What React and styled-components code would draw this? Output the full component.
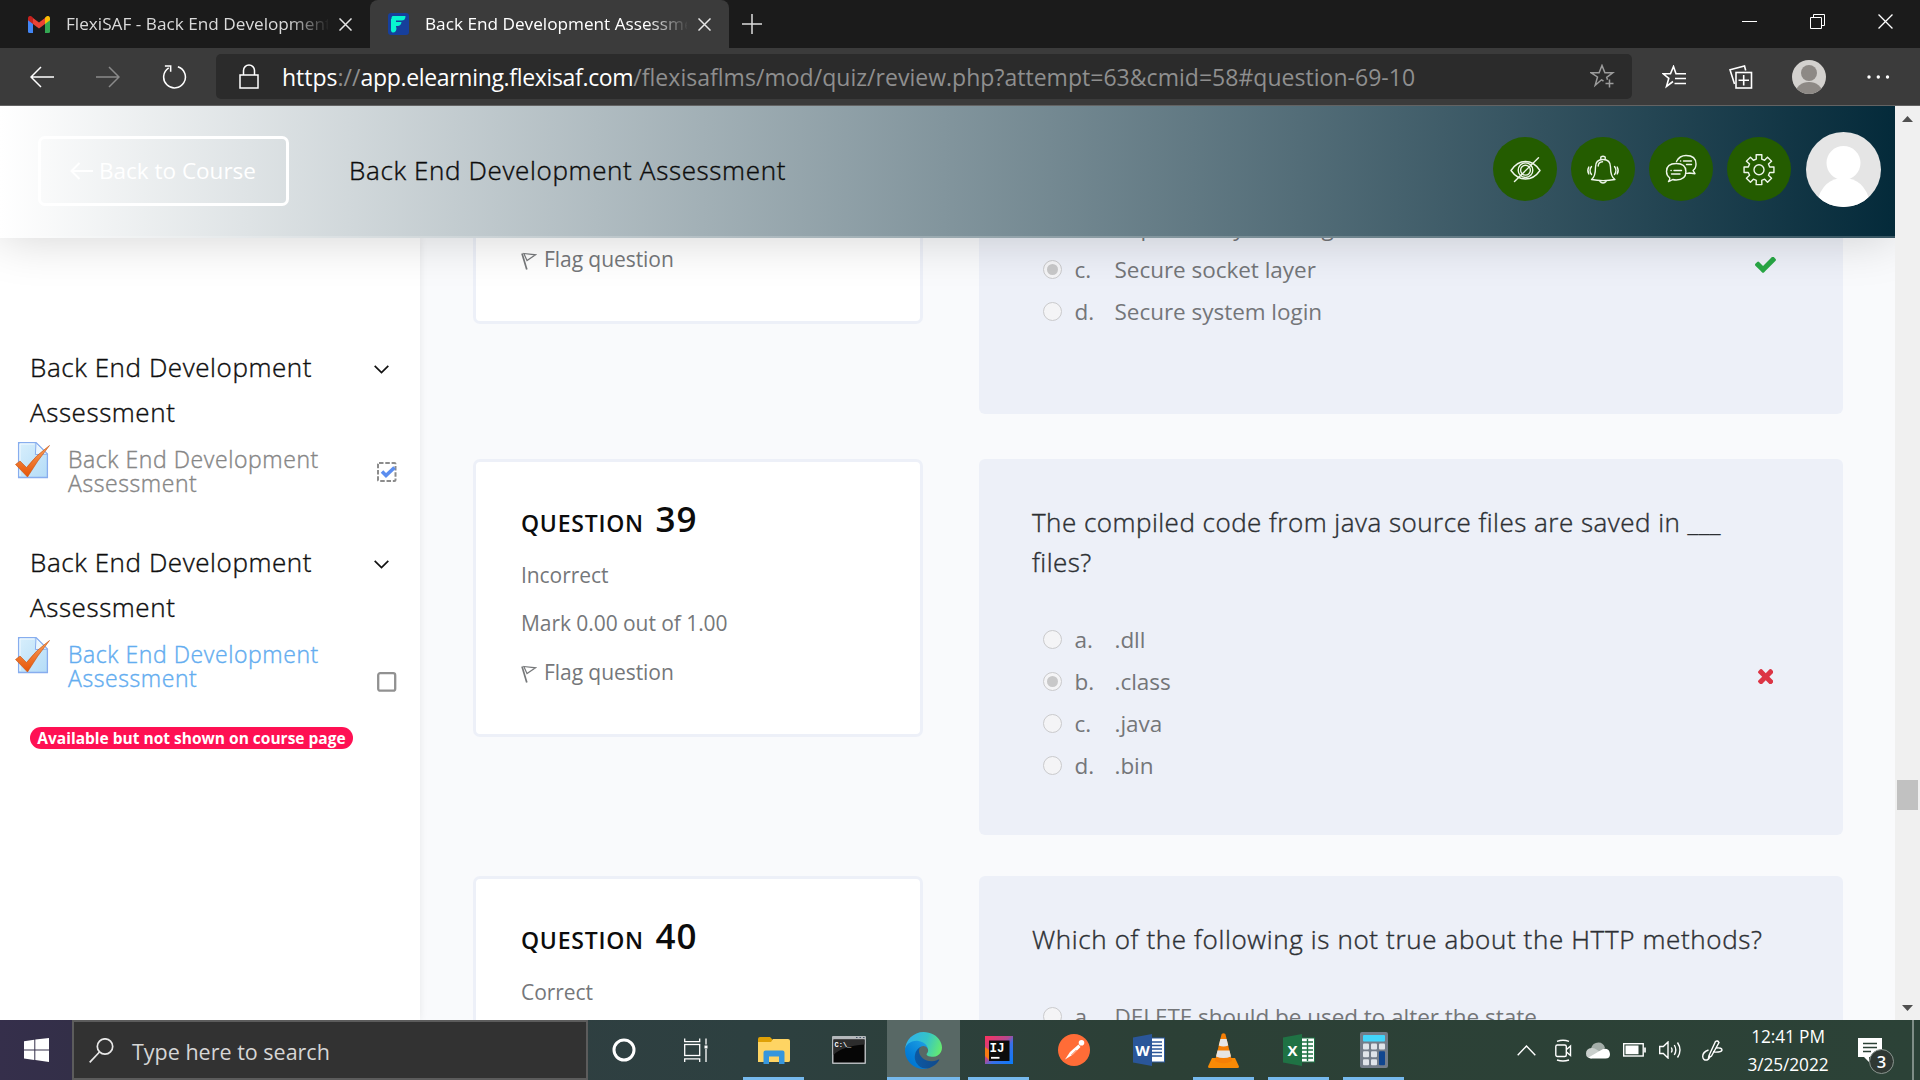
import React from "react";
import styled, { createGlobalStyle, css } from "styled-components";

const SANS = `"Open Sans", "Noto Sans", sans-serif`;

const GlobalStyle = createGlobalStyle`
  *, *::before, *::after { box-sizing: border-box; }
  body { margin: 0; background: #fff; font-family: ${SANS}; overflow: hidden; }
  svg { display: block; flex: none; }
`;

/* Light text with a hair of extra stroke, between the 300 and 400 weights. */
const softLight = css`
  font-weight: 300;
  -webkit-text-stroke: 0.4px currentColor;
`;

const Screen = styled.div`
  width: 1920px;
  height: 1080px;
  display: flex;
  flex-direction: column;
  overflow: hidden;
`;

/* ---------- Browser chrome ---------- */

const TabStrip = styled.div`
  height: 48px;
  flex: none;
  display: flex;
  background: #1b1b1b;
`;

const Tab = styled.div`
  width: ${(p) => (p.$active ? 359 : 370)}px;
  height: 48px;
  display: flex;
  align-items: center;
  padding-left: ${(p) => (p.$active ? 18 : 28)}px;
  border-radius: 8px 8px 0 0;
  background: ${(p) => (p.$active ? "#3b3b3b" : "transparent")};
`;

const TabTitle = styled.div`
  width: 262px;
  margin-left: 16px;
  overflow: hidden;
  white-space: nowrap;
  font-size: 17.2px;
  line-height: 48px;
  color: ${(p) => (p.$active ? "#fff" : "#dadada")};
  mask-image: linear-gradient(90deg, #000 222px, transparent 264px);
`;

const TabClose = styled.div`
  margin-left: 11px;
`;

const NewTab = styled.div`
  display: flex;
  align-items: center;
  padding-left: 13px;
`;

const WindowControls = styled.div`
  margin-left: auto;
  display: flex;
  align-items: center;
  gap: 53px;
  padding-right: 27px;
  padding-bottom: 6px;
`;

const Toolbar = styled.div`
  height: 58px;
  flex: none;
  display: flex;
  align-items: center;
  background: #3b3b3b;
  border-bottom: 1px solid #636363;
`;

const NavButtons = styled.div`
  width: 216px;
  display: flex;
  align-items: center;
  gap: 42px;
  padding-left: 30px;
`;

const AddressBar = styled.div`
  width: 1416px;
  height: 45px;
  display: flex;
  align-items: center;
  padding: 0 17px 0 23px;
  border-radius: 5px;
  background: #2b2b2b;
`;

const Url = styled.div`
  flex: 1;
  margin-left: 23px;
  padding-top: 2px;
  font-size: 23px;
  letter-spacing: 0.03px;
  line-height: 43px;
  white-space: nowrap;
  color: #8f8f8f;
`;

const UrlStrong = styled.span`
  color: #fff;
  letter-spacing: ${(p) => (p.$tight ? "-0.33px" : "0")};
`;

const ToolbarActions = styled.div`
  flex: 1;
  display: flex;
  align-items: center;
  padding-left: 30px;
`;

const Action = styled.div`
  margin-right: ${(p) => p.$after}px;
`;

/* ---------- Page ---------- */

const Viewport = styled.div`
  height: 914px;
  flex: none;
  display: flex;
`;

const Page = styled.div`
  width: 1895px;
  display: flex;
  flex-direction: column;
  overflow: hidden;
  background: #f9fafc;
`;

const Header = styled.header`
  position: relative;
  z-index: 2;
  height: 132px;
  flex: none;
  display: flex;
  align-items: center;
  padding: 0 14px 2px 38px;
  background: linear-gradient(90deg, #fff, #042a3a);
  border-bottom: 2px solid rgba(255, 255, 255, 0.2);
  background-origin: border-box;
  box-shadow: 0 0 50px rgba(0, 0, 0, 0.18);
`;

const BackButton = styled.button`
  width: 251px;
  height: 70px;
  display: flex;
  align-items: center;
  justify-content: center;
  gap: 6px;
  margin: 2px 0 0;
  padding: 0 1px 0 0;
  border: 3px solid #fff;
  border-radius: 7px;
  background: transparent;
  color: #fff;
  font: 400 22.5px/30px ${SANS};
`;

const HeaderTitle = styled.h1`
  margin: 0 auto 0 60px;
  font-size: 26px;
  ${softLight}
  letter-spacing: 0.65px;
  line-height: 36px;
  color: #0c0c0c;
`;

const HeaderTools = styled.div`
  display: flex;
  align-items: center;
  gap: 14px;
  margin-bottom: 2px;
`;

const RoundButton = styled.div`
  width: 64px;
  height: 64px;
  display: flex;
  border-radius: 50%;
  background: #245c00;
`;

const Avatar = styled.div`
  width: 75px;
  height: 75px;
  margin-left: 1px;
  border-radius: 50%;
  overflow: hidden;
`;

const Body = styled.div`
  height: 782px;
  display: flex;
  overflow: hidden;
`;

/* ---------- Sidebar ---------- */

const Sidebar = styled.aside`
  width: 420px;
  flex: none;
  padding-top: 107px;
  background: #fff;
  box-shadow: 0 0 8px rgba(0, 0, 0, 0.08);
`;

const Section = styled.section`
  height: 195px;
`;

const SectionHead = styled.div`
  height: 90px;
  display: flex;
  justify-content: space-between;
  padding: 0 31px 0 30px;
`;

const SectionTitle = styled.h2`
  width: 300px;
  margin: 0;
  font-size: 26px;
  ${softLight}
  letter-spacing: 0.58px;
  line-height: 45px;
  color: #0e0e0e;
`;

const ChevronBox = styled.div`
  padding-top: 20px;
`;

const Activity = styled.div`
  display: flex;
  align-items: flex-start;
  padding: 7px 23px 0 14px;
`;

const ActivityLink = styled.a`
  width: 270px;
  margin: 5px 0 0 18px;
  font-size: 23px;
  ${softLight}
  letter-spacing: 0.58px;
  line-height: 24.3px;
  color: ${(p) => (p.$current ? "#63adf0" : "#868686")};
`;

const CompletionBox = styled.div`
  margin: ${(p) => (p.$lower ? 35 : 20)}px 0 0 auto;
`;

const Notice = styled.div`
  width: 323px;
  height: 22px;
  margin: -8px 0 0 30px;
  border-radius: 11px;
  background: #ff1053;
  color: #fff;
  font-size: 15.5px;
  font-weight: 700;
  line-height: 22px;
  text-align: center;
  white-space: nowrap;
`;

/* ---------- Quiz ---------- */

const Quiz = styled.main`
  flex: 1;
  display: flex;
  flex-direction: column;
  padding: 0 52px 0 53px;
`;

const QuestionRow = styled.div`
  flex: none;
  display: flex;
  align-items: flex-start;
  gap: 56px;
  margin-bottom: ${(p) => p.$after || 0}px;
`;

const cut = css`
  border-top: 0;
  border-top-left-radius: 0;
  border-top-right-radius: 0;
`;

const InfoCard = styled.div`
  width: 450px;
  height: ${(p) => p.$height}px;
  padding: ${(p) => (p.$cut ? 0 : 37)}px 0 0 45px;
  border: 3px solid #edf0f8;
  border-radius: 7px;
  background: #fff;
  ${(p) => p.$cut && cut}
`;

const InfoHeading = styled.h3`
  height: 51.5px;
  margin: 0;
  display: flex;
  align-items: baseline;
  font-weight: 600;
  line-height: 40px;
  color: #0c0c0c;
`;

const InfoLabel = styled.span`
  width: 134.5px;
  font-size: 23px;
  letter-spacing: 0.75px;
`;

const InfoNumber = styled.span`
  font-size: 35px;
  letter-spacing: 0.9px;
`;

const InfoLine = styled.div`
  height: 48.5px;
  display: flex;
  align-items: center;
  gap: 7px;
  font-size: 21px;
  letter-spacing: -0.06px;
  line-height: 48px;
  color: #75777a;
  margin-top: ${(p) => p.$shift || 0}px;
`;

const QuestionCard = styled.div`
  width: 864px;
  height: ${(p) => p.$height}px;
  padding: ${(p) => (p.$cut ? 0 : 43)}px 49px 0 53px;
  border-radius: 6px;
  background: #edf0f8;
  overflow: hidden;
  ${(p) => p.$cut && cut}
`;

const QuestionText = styled.p`
  width: 740px;
  margin: 0 0 36.5px;
  font-size: 26px;
  ${softLight}
  letter-spacing: ${(p) => p.$tracking}px;
  line-height: 40px;
  color: #2c2f33;
`;

const Options = styled.div`
  margin-top: ${(p) => p.$shift || 0}px;
`;

const Option = styled.div`
  height: 42px;
  display: flex;
  align-items: center;
  padding: 0 18px 0 11px;
  font-size: 22.5px;
  letter-spacing: -0.03px;
  line-height: 42px;
  white-space: nowrap;
  color: #747679;
`;

const Radio = styled.span`
  width: 19px;
  height: 19px;
  display: flex;
  align-items: center;
  justify-content: center;
  border: 1px solid #cacacc;
  border-radius: 50%;
  background: #f4f4f6;
  &::after {
    content: "";
    width: 11px;
    height: 11px;
    border-radius: 50%;
    background: ${(p) => (p.$checked ? "#c8c8c9" : "transparent")};
  }
`;

const Letter = styled.span`
  width: 40px;
  margin-left: 12.5px;
`;

const Grade = styled.span`
  margin: 0 0 10px auto;
  width: 21px;
  display: flex;
  justify-content: center;
`;

const ScrollTrack = styled.div`
  width: 25px;
  display: flex;
  flex-direction: column;
  align-items: center;
  padding: 10px 0 9px;
  background: #f0f0f0;
`;

const ScrollThumb = styled.div`
  width: 21px;
  height: 30px;
  margin: 658px 0 auto;
  background: #c1c1c1;
`;

/* ---------- Taskbar ---------- */

const Taskbar = styled.div`
  height: 60px;
  flex: none;
  display: flex;
  background: linear-gradient(90deg, #352f4b 0, #332f48 72px, #2f3f41 560px, #2d4040 750px, #2c4036 1150px, #2c4237 1920px);
`;

const Start = styled.div`
  width: 72px;
  padding: 18px 0 0 24px;
`;

const SearchBox = styled.div`
  width: 516px;
  display: flex;
  align-items: center;
  gap: 18px;
  padding-left: 15px;
  border: 2px solid #5c5c5c;
  background: #323232;
  color: #d6d6d6;
  font-size: 21.5px;
  line-height: 54px;
`;

const SearchHint = styled.span`
  padding-top: 3px;
`;

const SystemButtons = styled.div`
  width: 148px;
  display: flex;
  align-items: center;
  padding-left: 24px;
  gap: 48px;
`;

const AppButton = styled.div`
  width: 75px;
  display: flex;
  justify-content: center;
`;

const AppTile = styled.div`
  width: ${(p) => (p.$focused ? 73 : 61)}px;
  height: 60px;
  display: flex;
  align-items: center;
  justify-content: center;
  background: ${(p) => (p.$focused ? "#586865" : "transparent")};
  border-bottom: 3px solid ${(p) => (p.$running ? "#76b9ed" : "transparent")};
  padding-top: 3px;
`;

const Tray = styled.div`
  margin-left: auto;
  display: flex;
  align-items: center;
`;

const TrayItem = styled.div`
  margin-right: ${(p) => p.$after}px;
  padding-top: ${(p) => p.$drop || 0}px;
`;

const Clock = styled.div`
  width: 88px;
  margin-right: 26px;
  padding-top: 2px;
  color: #fff;
  font-size: 17.3px;
  letter-spacing: -0.1px;
  line-height: 28px;
  text-align: center;
  white-space: nowrap;
`;

const ShowDesktop = styled.div`
  width: 8px;
  height: 60px;
  border-left: 2px solid #7f8d86;
`;

/* ---------- Drawings ---------- */

const Cross = ({ size = 13, color = "#e6e6e6", w = 1.6 }) => (
  <svg width={size} height={size} viewBox="0 0 14 14" stroke={color} strokeWidth={w} fill="none">
    <path d="M.5.5l13 13M13.5.5l-13 13" />
  </svg>
);

const GmailLogo = () => (
  <svg width="22" height="17" viewBox="0 0 22 17">
    <path d="M0 3v12.500Q0 17 1.500 17H5V7z" fill="#4285f4" />
    <path d="M22 3v12.500Q22 17 20.500 17H17V7z" fill="#34a853" />
    <path d="M5 8V2l6 4.600L17 2v6l-6 4.600z" fill="#ea4335" />
    <path d="M0 2.400C0 0 2.400-.8 4 .8L5 1.700V8L0 4.300z" fill="#c5221f" />
    <path d="M22 2.400C22 0 19.600-.8 18 .8l-1 .9V8l5-3.700z" fill="#fbbc04" />
  </svg>
);

const FlexiLogo = () => (
  <svg width="21" height="22" viewBox="0 0 21 22">
    <rect width="21" height="22" rx="3" fill="#163f9c" />
    <path d="M5 3h12.500q0 4.500-4 4.500H3.500Q3 3 5 3zM3 9h10.500q-.5 4-4 4H3zM3 14.500h5.500q0 5-3.500 5-2.500 0-2-5z" fill="#08f5d0" />
    <path d="M3 6h5v9H3z" fill="#08f5d0" />
  </svg>
);

const Arrow = ({ color, flip }) => (
  <svg width="24" height="22" viewBox="0 0 24 22" fill="none" stroke={color} strokeWidth="1.500">
    <path d={flip ? "M0 11h23M13 1l10 10-10 10" : "M24 11H1M11 1L1 11l10 10"} />
  </svg>
);

const Refresh = () => (
  <svg width="25" height="25" viewBox="0 0 26 25" fill="none" stroke="#fff" strokeWidth="1.600">
    <path d="M16.500 2.300A11.300 11.300 0 1 1 7 3.500M3 1.500h6v6" />
  </svg>
);

const Lock = () => (
  <svg width="20" height="25" viewBox="0 0 20 25" fill="none" stroke="#fff" strokeWidth="1.500">
    <rect x="1" y="11" width="18" height="13" />
    <path d="M4.500 11V6.500a5.500 5.500 0 0 1 11 0V11" />
  </svg>
);

const StarPlus = () => (
  <svg width="25" height="25" viewBox="0 0 25 25" fill="none" stroke="#9b9b9b" strokeWidth="1.500">
    <path d="M13.500 17l-2-1.200-6.300 5.400 2.300-8.200L1.200 8.800h7.900L12 1.500l2.900 7.300h7.900l-6.100 4.500.8 2.500M19.500 15.500v8M15.500 19.500h8" />
  </svg>
);

const StarList = () => (
  <svg width="25" height="24" viewBox="0 0 25 24" fill="none" stroke="#fff" strokeWidth="1.600">
    <path d="M11 16.500l-6.500 5 2.300-8.200L1.200 8.800h7.300L11.500 1.500l2.500 7.300h10M13 13.500h11M12.500 18.500H24" />
  </svg>
);

const Collections = () => (
  <svg width="24" height="24" viewBox="0 0 24 24" fill="none" stroke="#fff" strokeWidth="1.600">
    <path d="M5.500 19L1 4.700 15.500 1l1.200 4.500" />
    <rect x="7" y="7.500" width="15.500" height="15.500" />
    <path d="M14.700 10v10.500M9.500 15.200H20" />
  </svg>
);

const ProfilePicture = () => (
  <svg width="34" height="34" viewBox="0 0 34 34">
    <defs>
      <clipPath id="profile"><circle cx="17" cy="17" r="17" /></clipPath>
    </defs>
    <g clipPath="url(#profile)">
      <rect width="34" height="34" fill="#d3d1ce" />
      <circle cx="17" cy="13" r="8" fill="#8d8985" />
      <ellipse cx="17" cy="33" rx="13.500" ry="11" fill="#8d8985" />
    </g>
  </svg>
);

const UserPicture = () => (
  <svg width="75" height="75" viewBox="0 0 75 75">
    <rect width="75" height="75" fill="#e5e5e5" />
    <circle cx="37.500" cy="31" r="17" fill="#fff" />
    <path d="M11 70Q17 46 37.500 46T64 70v5H11z" fill="#fff" />
  </svg>
);

const line = { width: 64, height: 64, viewBox: "0 0 64 64", fill: "none", stroke: "#eef6ea", strokeWidth: 1.4, strokeLinejoin: "round", strokeLinecap: "round" };

const EyeOff = () => (
  <svg {...line}>
    <path d="M18 33.500Q24 24.500 32.500 24.500T47 33.500Q41 42 32.500 42T18 33.500z" />
    <circle cx="32.500" cy="33.200" r="7.300" />
    <circle cx="32.500" cy="33.200" r="4.900" />
    <path d="M21.500 44.500L45.500 20.800" />
  </svg>
);

const Bell = () => (
  <svg {...line}>
    <path d="M20.500 42.500q4-2.500 4-12.500 0-7.500 7.500-7.500T39.500 30q0 10 4.500 12.500-12 2.200-23.500 0zM28.500 44q3.500 4 7 0M29.800 22v-2q2.200-1.500 4.400 0v2M27.200 29q.3-4 4.300-4.200" />
    <path d="M20.500 29.500q-3 4 0 8M17.800 30q-2 3.500 0 7M43.500 29.500q3 4 0 8M46.200 30q2 3.500 0 7" />
  </svg>
);

const Chats = () => (
  <svg {...line}>
    <path d="M27.500 24.500q3-6 9.500-6 10 0 10 8.500 0 4.500-3 6.500l2 3.200-5.500-.7q-2 .5-3.700.3" />
    <path d="M19.500 44.500q1.500-1.500 1.300-3.500-3.300-2.500-3.300-6.500 0-8 9.700-8t9.700 8q0 8.500-9.700 8.500-2 0-3.500-.5-2 1.300-4.200 2z" />
    <path d="M31.500 24h.2M34.500 24h8M37.500 27.500h5M22 33.500h.2M25 33.500h7.500M22.500 37h8.500" />
  </svg>
);

const gearPath = (() => {
  const pts = [];
  for (let i = 0; i < 8; i += 1) {
    const a = (i * Math.PI) / 4;
    [[-0.25, 11], [-0.19, 15.2], [0.19, 15.2], [0.25, 11]].forEach(([d, r]) => {
      pts.push(`${(32 + r * Math.sin(a + d)).toFixed(2)} ${(32.7 - r * Math.cos(a + d)).toFixed(2)}`);
    });
  }
  return `M${pts.join("L")}z`;
})();

const Gear = () => (
  <svg {...line}>
    <path d={gearPath} />
    <circle cx="32" cy="32.700" r="5" />
  </svg>
);

const BackArrow = () => (
  <svg width="23" height="18" viewBox="0 0 23 18" fill="none" stroke="#fff" strokeWidth="2">
    <path d="M23 9H1.500M9.500 1l-8 8 8 8" />
  </svg>
);

const Chevron = () => (
  <svg width="15" height="9" viewBox="0 0 15 9" fill="none" stroke="#111" strokeWidth="1.700">
    <path d="M.7.8l6.800 6.700L14.300.8" />
  </svg>
);

const QuizIcon = () => (
  <svg width="36" height="37" viewBox="0 0 36 37">
    <defs>
      <linearGradient id="paper" x1="0" y1="0" x2="1" y2="1">
        <stop offset="0" stopColor="#d8effc" />
        <stop offset="1" stopColor="#b4dcf7" />
      </linearGradient>
      <linearGradient id="tick" x1="0" y1="0" x2="0" y2="1">
        <stop offset="0" stopColor="#f9a05c" />
        <stop offset="1" stopColor="#e65305" />
      </linearGradient>
    </defs>
    <path d="M4.600.7h17.500L33.400 12v23.500H4.600z" fill="url(#paper)" stroke="#87adee" strokeWidth="1.300" />
    <path d="M6 34V2h14.500" fill="none" stroke="#f2faff" />
    <path d="M22 .8l-.6 11.700 12-.3z" fill="#eaf6fe" stroke="#87adee" />
    <path d="M1.500 22.500l4.500-3.500 6.500 6.500Q22 13 35.500 3.500 23 19 13.500 35z" fill="url(#tick)" stroke="#c4500f" strokeWidth=".6" />
  </svg>
);

const BoxChecked = () => (
  <svg width="20" height="20" viewBox="0 0 20 20" fill="none">
    <rect x="1" y="1" width="17.500" height="18" rx="1" stroke="#8c8c8c" strokeWidth="2" strokeDasharray="4.500 1.800" />
    <path d="M5 9.500l4 4L17.500 5.500" stroke="#5b8def" strokeWidth="3.600" />
  </svg>
);

const BoxEmpty = () => (
  <svg width="20" height="20" viewBox="0 0 20 20" fill="none">
    <rect x="1.200" y="1.200" width="17" height="17.500" rx="2" stroke="#919191" strokeWidth="2.300" />
  </svg>
);

const Flag = () => (
  <svg width="16" height="22" viewBox="0 -4 16 22" fill="none" stroke="#77797b" strokeWidth="1.200">
    <path d="M1 1.500l4.800 16" strokeWidth="1.700" />
    <path d="M2.800 1.500L14.500 2.800 6 8.500z" />
  </svg>
);

const Tick = () => (
  <svg width="21" height="16" viewBox="121 370 1550 1152" fill="#28a745">
    <path d="M1671 566q0 40-28 68l-724 724-136 136q-28 28-68 28t-68-28l-136-136-362-362q-28-28-28-68t28-68l136-136q28-28 68-28t68 28l294 295 656-657q28-28 68-28t68 28l136 136q28 28 28 68z" />
  </svg>
);

const Wrong = () => (
  <svg width="15.500" height="15.500" viewBox="302 366 1188 1188" fill="#dc3545">
    <path d="M1490 1322q0 40-28 68l-136 136q-28 28-68 28t-68-28l-294-294-294 294q-28 28-68 28t-68-28l-136-136q-28-28-28-68t28-68l294-294-294-294q-28-28-28-68t28-68l136-136q28-28 68-28t68 28l294 294 294-294q28-28 68-28t68 28l136 136q28 28 28 68t-28 68l-294 294 294 294q28 28 28 68z" />
  </svg>
);

const Triangle = ({ down }) => (
  <svg width="11" height="6" viewBox="0 0 11 6" fill="#505050">
    <path d={down ? "M0 0h11L5.500 6z" : "M0 6h11L5.500 0z"} />
  </svg>
);

const WindowsLogo = () => (
  <svg width="25" height="24" viewBox="0 0 25 24" fill="#fff">
    <path d="M0 3.300l10.300-1.500v9.600H0zM11.300 1.600L25 0v11.400H11.300zM0 12.400h10.300v9.700L0 20.600zM11.300 12.400H25V24l-13.700-1.900z" />
  </svg>
);

const SearchGlass = () => (
  <svg width="25" height="25" viewBox="0 0 25 25" fill="none" stroke="#e8e8e8" strokeWidth="1.700">
    <circle cx="16" cy="8.500" r="7.700" />
    <path d="M10.500 14L.7 24.300" />
  </svg>
);

const Cortana = () => (
  <svg width="24" height="24" viewBox="0 0 24 24" fill="none" stroke="#fff" strokeWidth="3">
    <circle cx="12" cy="12" r="10" />
  </svg>
);

const TaskView = () => (
  <svg width="24" height="24" viewBox="0 0 24 24" fill="none" stroke="#fff" strokeWidth="1.300">
    <rect x=".7" y="6.500" width="15" height="11" />
    <path d="M.7.500v3.200h15V.5M.7 24v-3.200h15V24M22 .5v6M22 11v13" />
    <rect x="20.500" y="7.500" width="3" height="3" fill="#fff" stroke="none" />
  </svg>
);

const Explorer = () => (
  <svg width="32" height="27" viewBox="0 0 32 27">
    <path d="M0 2q0-2 2-2h10l3 3H30q2 0 2 2v18q0 2-2 2H2q-2 0-2-2z" fill="#dfa106" />
    <path d="M0 5h13l2-3h15q2 0 2 2v19q0 2-2 2H0z" fill="#fed463" />
    <path d="M5.500 27V15.500q0-2 2-2h17q2 0 2 2V27H21v-7.500H11V27z" fill="#3696dc" />
  </svg>
);

const Terminal = () => (
  <svg width="34" height="28" viewBox="0 0 34 28">
    <rect width="34" height="28" rx="1" fill="#b4b8bb" />
    <rect x="1.500" y="3.500" width="31" height="23" fill="#060606" />
    <path d="M1.500 3.500h31v5Q10 10 1.500 19z" fill="#2c2c2c" />
    <path d="M24 1.500h1.500M27.500 1.500H29M31 1.500h1.500" stroke="#456" />
    <text x="2.500" y="10.500" fontFamily="Liberation Mono, monospace" fontSize="7" fontWeight="700" fill="#fff">C:\_</text>
  </svg>
);

const EdgeLogo = () => (
  <svg width="37" height="37" viewBox="0 0 256 256">
    <defs>
      <linearGradient id="ea" x1="63" y1="177" x2="241" y2="177" gradientUnits="userSpaceOnUse">
        <stop offset="0" stopColor="#0c59a4" /><stop offset="1" stopColor="#114a8b" />
      </linearGradient>
      <linearGradient id="eb" x1="157" y1="95" x2="46" y2="216" gradientUnits="userSpaceOnUse">
        <stop offset="0" stopColor="#1b9de2" /><stop offset=".7" stopColor="#0680d7" /><stop offset="1" stopColor="#0078d4" />
      </linearGradient>
      <linearGradient id="ec" x1="20" y1="60" x2="245" y2="140" gradientUnits="userSpaceOnUse">
        <stop offset="0" stopColor="#2fb3e8" /><stop offset=".5" stopColor="#35c4c8" /><stop offset="1" stopColor="#66eb6e" />
      </linearGradient>
    </defs>
    <path d="M231 190.500a93.700 93.700 0 0 1-10.500 4.700 101.900 101.900 0 0 1-35.900 6.500c-47.300 0-88.500-32.500-88.500-74.300a31.500 31.500 0 0 1 16.400-27.300c-42.800 1.800-53.800 46.400-53.800 72.500 0 73.900 68.100 81.400 82.800 81.400 7.900 0 19.800-2.300 27-4.600l1.300-.4a128.300 128.300 0 0 0 66.600-52.800 4 4 0 0 0-5.400-5.700z" fill="url(#ea)" />
    <path d="M105.700 241.400a79.200 79.200 0 0 1-22.700-21.300 80.700 80.700 0 0 1 29.500-120c3.200-1.500 8.500-4.100 15.600-4a32.400 32.400 0 0 1 25.700 13 31.900 31.900 0 0 1 6.300 18.700c0-.2 24.500-79.600-80-79.600-43.900 0-80 41.700-80 78.200a130.200 130.200 0 0 0 12.100 56 128 128 0 0 0 156.400 67 75.500 75.500 0 0 1-62.800-8z" fill="url(#eb)" />
    <path d="M152.300 148.900c-.9 1-3.400 2.500-3.400 5.600 0 2.600 1.700 5.200 4.800 7.300 14.300 10 41.400 8.600 41.500 8.600a59.600 59.600 0 0 0 30.300-8.300 61.400 61.400 0 0 0 30.400-52.900c.3-22.400-8-37.300-11.300-43.900C223.500 23.900 177.700 0 128 0A128 128 0 0 0 0 126.200c.5-36.500 36.800-66 80-66 3.500 0 23.500.3 42 10.100 16.300 8.600 24.900 18.900 30.800 29.200 6.200 10.700 7.300 24.100 7.300 29.500 0 5.300-2.700 13.300-7.800 19.900z" fill="url(#ec)" />
  </svg>
);

const IntelliJ = () => (
  <svg width="28" height="28" viewBox="0 0 28 28">
    <defs>
      <linearGradient id="ij" x1="0" y1="0" x2="1" y2="1">
        <stop offset="0" stopColor="#fe315d" /><stop offset=".45" stopColor="#b34a92" /><stop offset=".6" stopColor="#3a6fe6" /><stop offset="1" stopColor="#087cfa" />
      </linearGradient>
    </defs>
    <rect width="28" height="28" fill="url(#ij)" />
    <path d="M0 11l4 3v10l-4-4z" fill="#f97a12" />
    <rect x="4" y="4.500" width="20.500" height="20.500" fill="#0c0c0c" />
    <text x="4.500" y="15.500" fontFamily="Liberation Mono, monospace" fontSize="12.500" fontWeight="700" fill="#fff">IJ</text>
    <path d="M6 21.800h8.500" stroke="#fff" strokeWidth="1.800" />
  </svg>
);

const Postman = () => (
  <svg width="32" height="32" viewBox="0 0 32 32">
    <circle cx="16" cy="16" r="16" fill="#ff6c37" />
    <circle cx="23.500" cy="8.800" r="2.800" fill="#fff" />
    <path d="M20.500 10.500l2 2.500-7.500 7.500-8 5 5-7.500z" fill="#fff" />
    <path d="M13.500 21l5-5" stroke="#ff6c37" />
  </svg>
);

const Office = ({ letter, dark, mid, children }) => (
  <svg width="32" height="32" viewBox="0 0 32 32">
    <rect x="16" y="4" width="15.500" height="24" fill="#fff" stroke={mid} />
    {children}
    <path d="M0 3.500L19 0v32L0 28.500z" fill={dark} />
    <text x="9.500" y="21.500" textAnchor="middle" fontFamily={SANS} fontSize="15" fontWeight="700" fill="#fff">{letter}</text>
  </svg>
);

const Word = () => (
  <Office letter="W" dark="#2a5699" mid="#2a5699">
    <path d="M19 8h10M19 11.500h10M19 15h10M19 18.500h10M19 22h10" stroke="#2a5699" strokeWidth="1.600" />
  </Office>
);

const Excel = () => (
  <Office letter="X" dark="#1f7244" mid="#1f7244">
    <path d="M19 8h11M19 12h11M19 16h11M19 20h11M19 24h11M24.500 5v22" stroke="#1f7244" strokeWidth="1.400" />
  </Office>
);

const Vlc = () => (
  <svg width="31" height="35" viewBox="0 0 31 35">
    <path d="M4 25h23l4 8.500q0 1.500-1.500 1.500h-28Q0 35 0 33.500z" fill="#f98a05" />
    <path d="M13.600 1q1.900-1.500 3.800 0L24 28q-8.500 4.500-17 0z" fill="#f57f06" />
    <path d="M12.400 6h6.200l1.700 6.500q-4.800 2-9.600 0zM9.500 17.500h12l1.500 6q-7.500 3-15 0z" fill="#e6e6e6" />
  </svg>
);

const Calculator = () => (
  <svg width="28" height="36" viewBox="0 0 28 36">
    <rect width="28" height="36" rx="2" fill="#737d8a" />
    <rect x="3" y="3" width="22" height="6.500" rx="1" fill="#42d5fb" />
    <g fill="#dfe4ea">
      <rect x="3" y="11.500" width="6" height="6" rx="1" /><rect x="11" y="11.500" width="6" height="6" rx="1" /><rect x="19" y="11.500" width="6" height="6" rx="1" />
      <rect x="3" y="19.300" width="6" height="6" rx="1" /><rect x="11" y="19.300" width="6" height="6" rx="1" />
      <rect x="3" y="27.200" width="6" height="6" rx="1" /><rect x="11" y="27.200" width="6" height="6" rx="1" />
    </g>
    <rect x="19" y="19.300" width="6" height="13.900" rx="1" fill="#10468f" />
  </svg>
);

const tray = { fill: "none", stroke: "#fff", strokeWidth: 1.4 };

const TrayUp = () => (
  <svg width="19" height="11" viewBox="0 0 19 11" {...tray}><path d="M.7 10.300L9.500 1l8.800 9.300" /></svg>
);
const MeetNow = () => (
  <svg width="17" height="23" viewBox="0 0 17 23" {...tray}>
    <rect x=".8" y="6" width="10.500" height="11.500" rx="1.500" />
    <path d="M11.500 10.500l4-3.500v9.500l-4-3.500M2 2.300Q8 .2 14 2.300M2 21q6 2 12 0" />
  </svg>
);
const Cloud = () => (
  <svg width="24" height="17" viewBox="0 0 24 17">
    <path d="M5 6.500Q6.500.500 12.500.5q5 0 6.500 5.500L12 12z" fill="#a4aea9" />
    <path d="M5 16.500q-5-.5-5-5 0-5 5.500-5.500 3-.3 5 1.500l6 4z" fill="#c9cfcc" />
    <path d="M2.500 15.500L17 7q6.500-1 7 5 0 4.500-4.500 4.500H5z" fill="#fff" />
  </svg>
);
const Battery = () => (
  <svg width="23" height="14" viewBox="0 0 23 14" {...tray}>
    <rect x=".7" y=".7" width="19.500" height="12.300" />
    <rect x="2.500" y="2.500" width="13" height="8.700" fill="#fff" stroke="none" />
    <path d="M22 4.500v5" strokeWidth="1.700" />
  </svg>
);
const Speaker = () => (
  <svg width="23" height="18" viewBox="0 0 23 18" {...tray}>
    <path d="M.7 5.500h3.600L9 1v16l-4.700-4.500H.7zM12.300 6.500q1.500 2.500 0 5M15.300 4q3 5 0 10M18.500 1.500q5 7.500 0 15" />
  </svg>
);
const Pen = () => (
  <svg width="21" height="21" viewBox="0 0 21 21" {...tray}>
    <path d="M7 15.500L13.500 1.500q2-1.500 3.500 1L9.500 16l-3 2zM6.500 10Q.7 12 .7 16.500q.3 4 4.300 3.500 3-1 2.500-4.500M14.500 8q5.500-.5 5.500 2-.5 2.500-9 2" />
  </svg>
);
const ActionCenter = () => (
  <svg width="38" height="38" viewBox="0 0 38 38">
    <path d="M0 0h24v19H11v5l-5-5H0z" fill="#fff" />
    <path d="M5 5.500h14M5 9.500h14M5 13.500h8" stroke="#2c4237" strokeWidth="1.300" />
    <circle cx="23.500" cy="23.500" r="12" fill="#2f3833" stroke="#8b9690" />
    <text x="23.500" y="29.500" textAnchor="middle" fontFamily={SANS} fontSize="16.500" fontWeight="600" fill="#fff">3</text>
  </svg>
);

/* ---------- Content ---------- */

const apps = [
  { id: "explorer", Icon: Explorer, running: true },
  { id: "terminal", Icon: Terminal },
  { id: "edge", Icon: EdgeLogo, running: true, focused: true },
  { id: "intellij", Icon: IntelliJ, running: true },
  { id: "postman", Icon: Postman },
  { id: "word", Icon: Word },
  { id: "vlc", Icon: Vlc, running: true },
  { id: "excel", Icon: Excel, running: true },
  { id: "calculator", Icon: Calculator, running: true },
];

const OptionList = ({ items, shift }) => (
  <Options $shift={shift}>
    {items.map(([letter, text, Result]) => (
      <Option key={letter}>
        <Radio $checked={Boolean(Result)} />
        <Letter>{letter}.</Letter>
        {text}
        {Result && <Grade><Result /></Grade>}
      </Option>
    ))}
  </Options>
);

const Info = ({ number, state, mark }) => (
  <InfoCard $height={278}>
    <InfoHeading><InfoLabel>QUESTION</InfoLabel><InfoNumber>{number}</InfoNumber></InfoHeading>
    <InfoLine>{state}</InfoLine>
    {mark && <InfoLine>{mark}</InfoLine>}
    {mark && <InfoLine><Flag />Flag question</InfoLine>}
  </InfoCard>
);

const SidebarSection = ({ current }) => (
  <Section>
    <SectionHead>
      <SectionTitle>Back End Development Assessment</SectionTitle>
      <ChevronBox><Chevron /></ChevronBox>
    </SectionHead>
    <Activity>
      <QuizIcon />
      <ActivityLink $current={current}>Back End Development Assessment</ActivityLink>
      <CompletionBox $lower={current}>{current ? <BoxEmpty /> : <BoxChecked />}</CompletionBox>
    </Activity>
  </Section>
);

export default function App() {
  return (
    <Screen>
      <GlobalStyle />
      <TabStrip>
        <Tab>
          <GmailLogo />
          <TabTitle>FlexiSAF - Back End Development</TabTitle>
          <TabClose><Cross /></TabClose>
        </Tab>
        <Tab $active>
          <FlexiLogo />
          <TabTitle $active>Back End Development Assessment</TabTitle>
          <TabClose><Cross /></TabClose>
        </Tab>
        <NewTab>
          <svg width="20" height="20" viewBox="0 0 20 20" stroke="#ddd" strokeWidth="1.500"><path d="M10 0v20M0 10h20" /></svg>
        </NewTab>
        <WindowControls>
          <svg width="15" height="15" viewBox="0 0 15 15"><path d="M0 7.500h15" stroke="#fff" /></svg>
          <svg width="15" height="15" viewBox="0 0 15 15" fill="none" stroke="#fff"><path d="M.5 3.500h11v11H.5zM3.500 3V.5h11v11H12" /></svg>
          <Cross size={15} color="#fff" w={1.2} />
        </WindowControls>
      </TabStrip>

      <Toolbar>
        <NavButtons>
          <Arrow color="#fff" />
          <Arrow color="#8a8a8a" flip />
          <Refresh />
        </NavButtons>
        <AddressBar>
          <Lock />
          <Url>
            <UrlStrong>https</UrlStrong>://<UrlStrong $tight>app.elearning.flexisaf.com</UrlStrong>/flexisaflms/mod/quiz/review.php?attempt=63&amp;cmid=58#question-69-10
          </Url>
          <StarPlus />
        </AddressBar>
        <ToolbarActions>
          <Action $after={42}><StarList /></Action>
          <Action $after={39}><Collections /></Action>
          <Action $after={41}><ProfilePicture /></Action>
          <svg width="23" height="4" viewBox="0 0 23 4" fill="#fff"><circle cx="2" cy="2" r="1.700" /><circle cx="11.300" cy="2" r="1.700" /><circle cx="20.500" cy="2" r="1.700" /></svg>
        </ToolbarActions>
      </Toolbar>

      <Viewport>
        <Page>
          <Header>
            <BackButton><BackArrow />Back to Course</BackButton>
            <HeaderTitle>Back End Development Assessment</HeaderTitle>
            <HeaderTools>
              <RoundButton><EyeOff /></RoundButton>
              <RoundButton><Bell /></RoundButton>
              <RoundButton><Chats /></RoundButton>
              <RoundButton><Gear /></RoundButton>
              <Avatar><UserPicture /></Avatar>
            </HeaderTools>
          </Header>
          <Body>
            <Sidebar>
              <SidebarSection />
              <SidebarSection current />
              <Notice>Available but not shown on course page</Notice>
            </Sidebar>
            <Quiz>
              <QuestionRow $after={45}>
                <InfoCard $height={86} $cut>
                  <InfoLine $shift={-3}><Flag />Flag question</InfoLine>
                </InfoCard>
                <QuestionCard $height={176} $cut>
                  <OptionList
                    shift={-31.5}
                    items={[
                      ["b", "Super safety banking"],
                      ["c", "Secure socket layer", Tick],
                      ["d", "Secure system login"],
                    ]}
                  />
                </QuestionCard>
              </QuestionRow>
              <QuestionRow $after={41}>
                <Info number="39" state="Incorrect" mark="Mark 0.00 out of 1.00" />
                <QuestionCard $height={376}>
                  <QuestionText $tracking={0.48}>The compiled code from java source files are saved in ___ files?</QuestionText>
                  <OptionList
                    items={[
                      ["a", ".dll"],
                      ["b", ".class", Wrong],
                      ["c", ".java"],
                      ["d", ".bin"],
                    ]}
                  />
                </QuestionCard>
              </QuestionRow>
              <QuestionRow>
                <Info number="40" state="Correct" />
                <QuestionCard $height={376}>
                  <QuestionText $tracking={0.64}>Which of the following is not true about the HTTP methods?</QuestionText>
                  <OptionList items={[["a", "DELETE should be used to alter the state"]]} />
                </QuestionCard>
              </QuestionRow>
            </Quiz>
          </Body>
        </Page>
        <ScrollTrack>
          <Triangle />
          <ScrollThumb />
          <Triangle down />
        </ScrollTrack>
      </Viewport>

      <Taskbar>
        <Start><WindowsLogo /></Start>
        <SearchBox><SearchGlass /><SearchHint>Type here to search</SearchHint></SearchBox>
        <SystemButtons><Cortana /><TaskView /></SystemButtons>
        {apps.map(({ id, Icon, running, focused }) => (
          <AppButton key={id}>
            <AppTile $running={running} $focused={focused}><Icon /></AppTile>
          </AppButton>
        ))}
        <Tray>
          <TrayItem $after={19}><TrayUp /></TrayItem>
          <TrayItem $after={14}><MeetNow /></TrayItem>
          <TrayItem $after={13}><Cloud /></TrayItem>
          <TrayItem $after={13}><Battery /></TrayItem>
          <TrayItem $after={20}><Speaker /></TrayItem>
          <TrayItem $after={21}><Pen /></TrayItem>
          <Clock>12:41 PM<br />3/25/2022</Clock>
          <TrayItem $after={16} $drop={14}><ActionCenter /></TrayItem>
          <ShowDesktop />
        </Tray>
      </Taskbar>
    </Screen>
  );
}
